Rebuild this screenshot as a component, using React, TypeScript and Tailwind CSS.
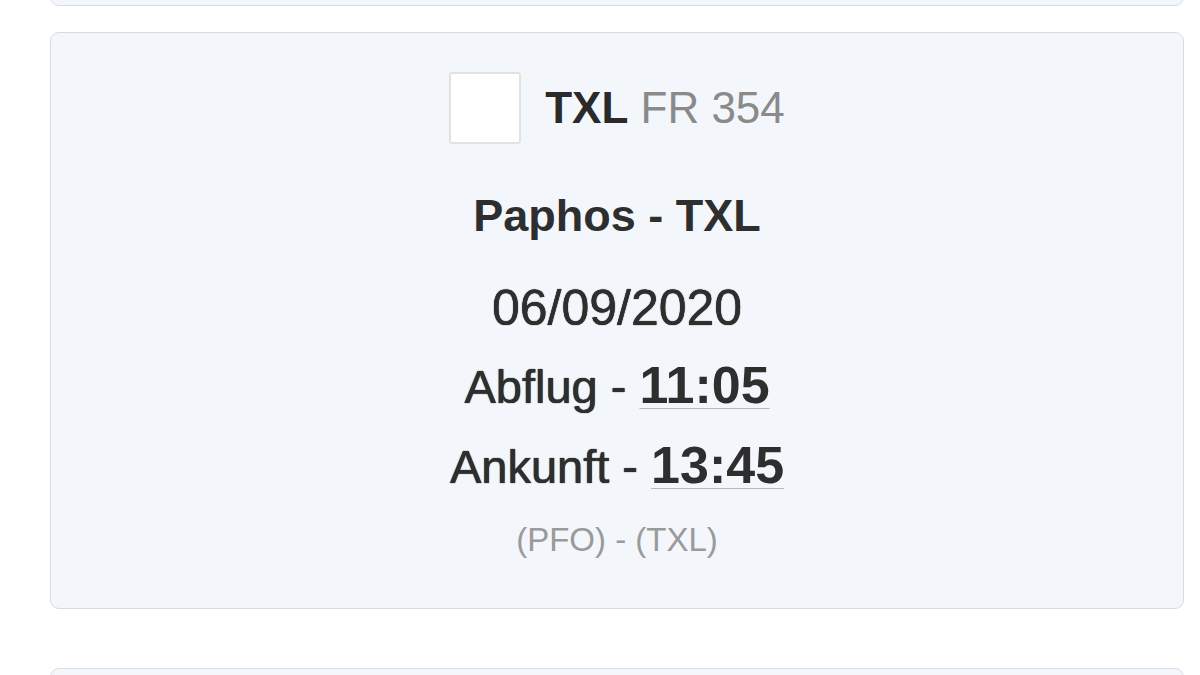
import React from "react";

const flight = {
  code: "TXL",
  number: "FR 354",
  route: "Paphos - TXL",
  date: "06/09/2020",
  departure: "11:05",
  arrival: "13:45",
  airports: "(PFO) - (TXL)",
};

const Card = ({ className, children }: { className?: string; children?: React.ReactNode }) => (
  <div className={`rounded-[9px] border border-[#d5dde4] bg-[#f3f7fb] ${className ?? ""}`}>{children}</div>
);

// the reference renders these lines a touch heavier than plain regular
const heavy = "[text-shadow:0_0_0.8px_#2e2e2e,0_0_0.8px_#2e2e2e]";

export default function App() {
  return (
    <div
      className="h-[675px] w-[1200px] overflow-hidden bg-white pl-[50px] pr-[16px]"
      style={{ fontFamily: '"Liberation Sans", Arial, sans-serif' }}
    >
      <Card className="-mt-[34px] h-[40px] w-[1134px]" />

      <Card className="mt-[26px] flex h-[577px] w-[1134px] flex-col items-center">
        <div className="mt-[39px] flex h-[72px] items-center gap-[24px]">
          <div className="h-[72px] w-[72px] rounded-[3px] border-2 border-[#e2e2e2] bg-white" />
          <div className="text-[44px] leading-none">
            <span className="font-bold text-[#2a2a2a]">{flight.code}</span>{" "}
            <span className="text-[#8a8a8a]">{flight.number}</span>
          </div>
        </div>

        <div className="mt-[44px] text-[45px] font-bold leading-[56px] text-[#2e2e2e]">{flight.route}</div>

        <div className={`mt-[36px] text-[50px] leading-[56px] text-[#2e2e2e] ${heavy}`}>{flight.date}</div>

        <div className={`mt-[19px] text-[47px] leading-[60px] text-[#2e2e2e] ${heavy}`}>
          Abflug -{" "}
          <span className="text-[52px] font-bold underline decoration-[#b9b9b9] decoration-1 underline-offset-[5px] [text-shadow:none]">
            {flight.departure}
          </span>
        </div>

        <div className={`mt-[18px] text-[47px] leading-[60px] text-[#2e2e2e] ${heavy}`}>
          Ankunft -{" "}
          <span className="text-[52px] font-bold underline decoration-[#b9b9b9] decoration-1 underline-offset-[5px] [text-shadow:none]">
            {flight.arrival}
          </span>
        </div>

        <div className="mt-[23px] text-[33px] leading-[40px] text-[#9a9a9a]">{flight.airports}</div>
      </Card>

      <Card className="mt-[59px] h-[80px] w-[1134px]" />
    </div>
  );
}
